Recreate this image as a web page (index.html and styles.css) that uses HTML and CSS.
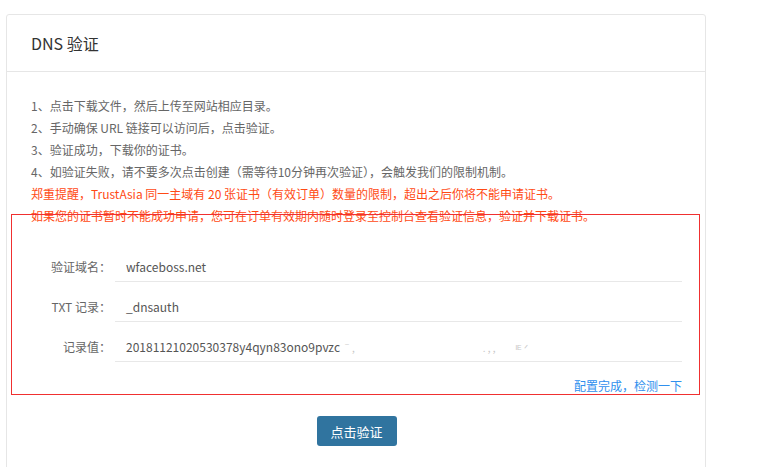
FILE: index.html
```html
<!DOCTYPE html>
<html lang="zh-CN">
<head>
<meta charset="utf-8">
<title>DNS 验证</title>
<link rel="stylesheet" href="styles.css">
</head>
<body>
<div class="card">
  <div class="card-header">DNS 验证</div>
  <div class="card-body">
    <ul class="tips">
      <li>1、点击下载文件，然后上传至网站相应目录。</li>
      <li>2、手动确保 URL 链接可以访问后，点击验证。</li>
      <li>3、验证成功，下载你的证书。</li>
      <li>4、如验证失败，请不要多次点击创建（需等待10分钟再次验证），会触发我们的限制机制。</li>
      <li class="warn">郑重提醒，TrustAsia 同一主域有 20 张证书（有效订单）数量的限制，超出之后你将不能申请证书。</li>
      <li class="warn">如果您的证书暂时不能成功申请，您可在订单有效期内随时登录至控制台查看验证信息，验证并下载证书。</li>
    </ul>
    <div class="form">
      <div class="row"><div class="label">验证域名：</div><div class="value">wfaceboss.net</div></div>
      <div class="row"><div class="label">TXT 记录：</div><div class="value">_dnsauth</div></div>
      <div class="row"><div class="label">记录值：</div><div class="value">20181121020530378y4qyn83ono9pvzc<span class="ghost g1">ˉ,</span><span class="ghost g2">. , ,</span><span class="ghost g3">ᴵᴱ ᐟ</span></div></div>
    </div>
    <div class="check"><a class="link" href="#">配置完成，检测一下</a></div>
    <div class="actions"><button class="btn">点击验证</button></div>
  </div>
</div>
<div class="annot"></div>
</body>
</html>
```

FILE: styles.css
```css
html, body {
  margin: 0;
  padding: 0;
  background: #fff;
}
body {
  font-family: "Noto Sans CJK SC", "Liberation Sans", sans-serif;
  font-size: 12px;
  color: #666;
  position: relative;
  height: 467px;
  overflow: hidden;
}
.card {
  margin: 14px 0 0 6px;
  width: 698px;
  border: 1px solid #e6e6e6;
  border-radius: 3px;
  background: #fff;
}
.card-header {
  height: 56px;
  line-height: 56px;
  padding-left: 24px;
  font-size: 16px;
  color: #333;
  border-bottom: 1px solid #e6e6e6;
}
.card-body {
  padding: 23px 23px 40px 24px;
}
.tips {
  list-style: none;
  margin: 0;
  padding: 0;
}
.tips li {
  line-height: 22px;
  height: 22px;
  white-space: nowrap;
  color: #666;
}
.tips li.warn {
  color: #ff4a14;
}
.form {
  margin-top: 15px;
}
.row {
  display: flex;
  height: 40px;
  box-sizing: border-box;
}
.label {
  width: 80px;
  padding: 10px 4px 0 0;
  text-align: right;
  line-height: 30px;
  color: #666;
  font-family: "Noto Sans CJK TC", "Noto Sans CJK SC", sans-serif;
}
.value {
  flex: 1;
  padding: 10px 0 0 11px;
  line-height: 29px;
  border-bottom: 1px solid #e8e8e8;
  color: #555;
  font-size: 12px;
  white-space: nowrap;
}
.ghost {
  color: #c8c8c8;
  font-size: 10px;
}
.g1 { margin-left: 2px; }
.g2 { margin-left: 128px; }
.g3 { margin-left: 20px; }
.check {
  margin-top: 13px;
  text-align: right;
  line-height: 22px;
}
.link {
  color: #3090ee;
  text-decoration: none;
}
.actions {
  margin-top: 19px;
  display: flex;
  justify-content: center;
}
.btn {
  width: 80px;
  height: 30px;
  border: none;
  border-radius: 3px;
  background: #30749f;
  color: #fff;
  font-family: "Noto Sans CJK SC", "Liberation Sans", sans-serif;
  font-size: 13px;
  padding: 0;
}
.annot {
  position: absolute;
  left: 11px;
  top: 214px;
  width: 687px;
  height: 179px;
  border: 1px solid #f03030;
  pointer-events: none;
}
```
